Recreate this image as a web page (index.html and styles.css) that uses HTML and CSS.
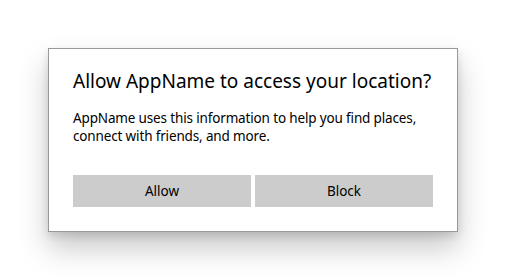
FILE: index.html
```html
<!DOCTYPE html>
<html lang="en">
<head>
<meta charset="utf-8">
<title>Location permission</title>
<link rel="stylesheet" href="styles.css">
</head>
<body>
<div class="stage">
  <div class="dialog" role="dialog" aria-labelledby="dlg-title">
    <h1 class="dialog-title" id="dlg-title">Allow AppName to access your location?</h1>
    <p class="dialog-body">AppName uses this information to help you find places, connect with friends, and more.</p>
    <div class="dialog-actions">
      <button class="btn" type="button">Allow</button>
      <button class="btn" type="button">Block</button>
    </div>
  </div>
</div>
</body>
</html>
```

FILE: styles.css
```css
html, body {
  margin: 0;
  padding: 0;
  background: #ffffff;
}

.stage {
  box-sizing: border-box;
  min-height: 280px;
  padding: 48px 0 48px 48px;
  display: flex;
  align-items: flex-start;
}

.dialog {
  box-sizing: border-box;
  width: 410px;
  height: 184px;
  background: #ffffff;
  border: 1px solid #999999;
  padding: 18px 24px 24px;
  display: flex;
  flex-direction: column;
  box-shadow: 0 16px 28px rgba(0, 0, 0, 0.22), 0 4px 8px rgba(0, 0, 0, 0.12);
  font-family: "Noto Sans", "Open Sans", sans-serif;
  color: #000000;
}

.dialog-title {
  margin: 0;
  font-size: 19px;
  font-weight: 400;
  line-height: 28px;
  white-space: nowrap;
}

.dialog-body {
  margin: 14px 0 0;
  font-size: 13.5px;
  line-height: 18px;
  letter-spacing: -0.15px;
}

.dialog-actions {
  margin-top: auto;
  display: grid;
  grid-template-columns: 1fr 1fr;
  gap: 4px;
}

.btn {
  height: 32px;
  border: none;
  background: #cccccc;
  font-family: inherit;
  font-size: 13.5px;
  color: #000000;
  padding: 0;
}
```
